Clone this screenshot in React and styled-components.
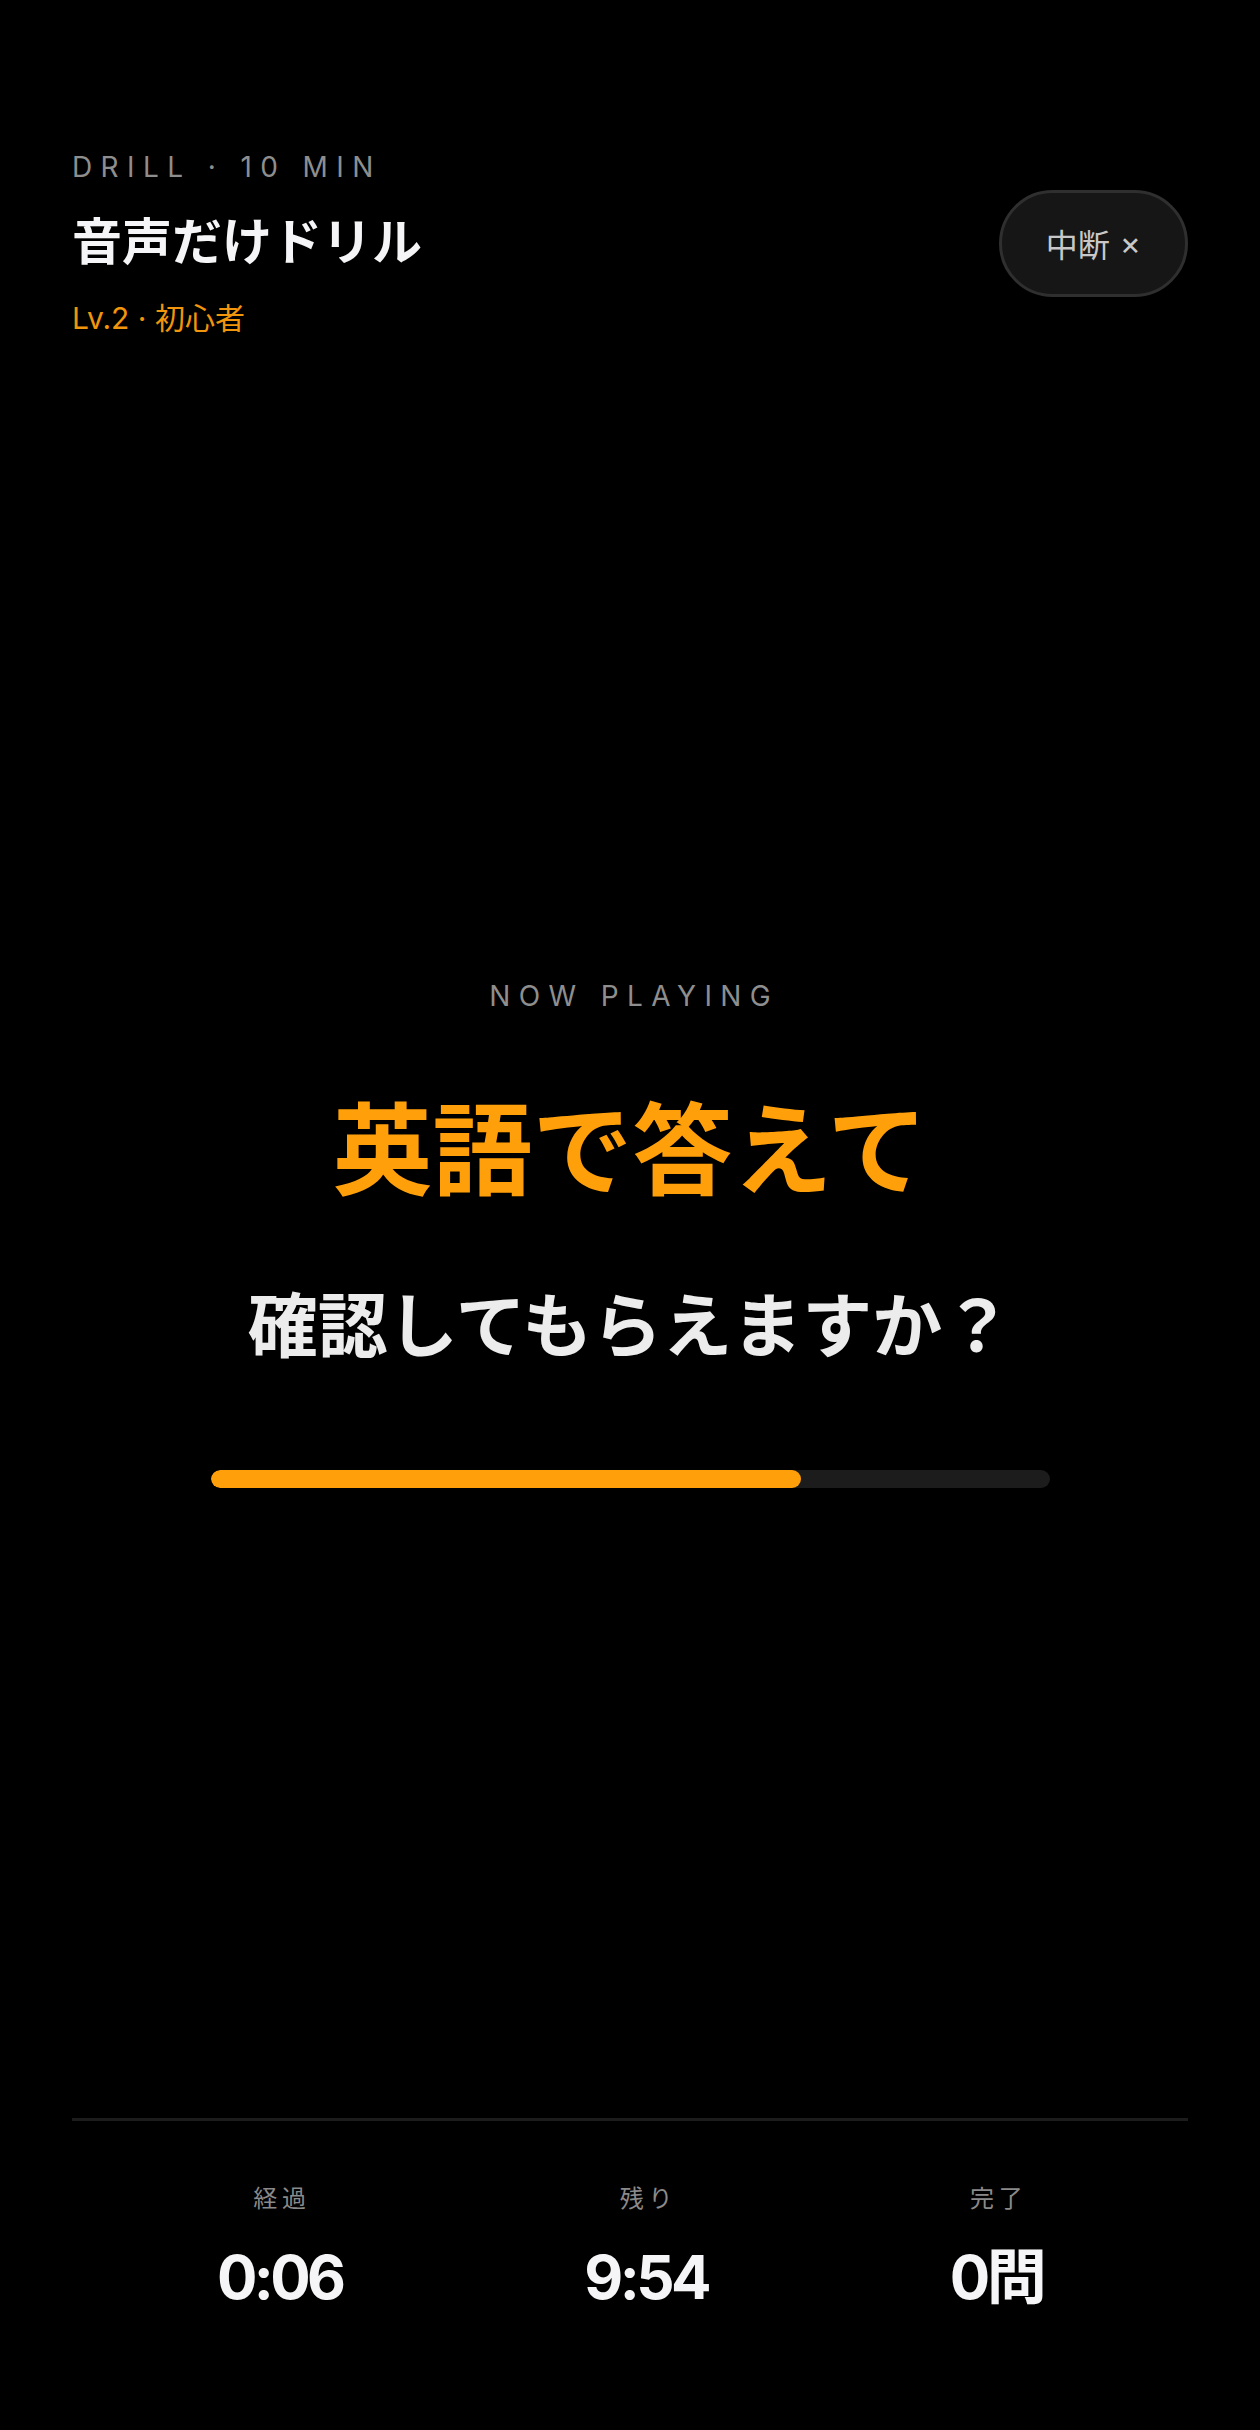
import styled, { createGlobalStyle } from "styled-components";

const GlobalStyle = createGlobalStyle`
    html, body {
        margin: 0;
        padding: 0;
        background: #000;
    }
    body {
        font-family: Inter, "Noto Sans CJK JP", sans-serif;
        color: #f5f5f7;
        -webkit-font-smoothing: antialiased;
    }
`;

const Screen = styled.div`
    min-height: 100vh;
    display: flex;
    flex-direction: column;
    padding: 150px 72px 0;
    box-sizing: border-box;
    background: #000;
`;

const Header = styled.header`
    display: flex;
    align-items: center;
    justify-content: space-between;
`;

const HeaderText = styled.div`
    display: flex;
    flex-direction: column;
`;

const Eyebrow = styled.div`
    font-size: 28px;
    line-height: 34px;
    letter-spacing: 0.3em;
    color: #8e8e8e;
`;

const Title = styled.h1`
    margin: 28px 0 0;
    font-size: 50px;
    line-height: 60px;
    font-weight: 700;
    color: #f5f5f7;
`;

const Level = styled.div`
    margin-top: 28px;
    font-size: 30px;
    line-height: 36px;
    color: #f0950c;
`;

const StopButton = styled.button`
    height: 107px;
    padding: 0 44px;
    border-radius: 54px;
    border: 3px solid #2f2f2f;
    background: #161616;
    color: #c8c8c8;
    font-family: inherit;
    font-size: 32px;
    display: flex;
    align-items: center;
    gap: 10px;
    cursor: pointer;
`;

const Main = styled.main`
    flex: 1;
    padding-top: 12px;
    display: flex;
    flex-direction: column;
    align-items: center;
    justify-content: center;
`;

const NowPlaying = styled.div`
    font-size: 28px;
    line-height: 34px;
    letter-spacing: 0.3em;
    margin-right: -0.3em;
    color: #8e8e8e;
`;

const Prompt = styled.div`
    margin-top: 78px;
    font-size: 100px;
    line-height: 120px;
    font-weight: 700;
    color: #ff9f0a;
`;

const Question = styled.div`
    margin-top: 74px;
    font-size: 70px;
    line-height: 84px;
    font-weight: 700;
    color: #ececec;
`;

const Track = styled.div`
    margin-top: 101px;
    width: 839px;
    height: 18px;
    border-radius: 9px;
    background: #1c1c1c;
    overflow: hidden;
`;

const Fill = styled.div`
    height: 100%;
    border-radius: 9px;
    background: #ff9f0a;
`;

const Footer = styled.footer`
    border-top: 3px solid #1c1c1c;
    padding: 63px 24px 117px;
    display: flex;
    justify-content: space-around;
`;

const Stat = styled.div`
    display: flex;
    flex-direction: column;
    align-items: center;
`;

const StatLabel = styled.div`
    font-size: 24px;
    line-height: 30px;
    letter-spacing: 0.2em;
    margin-right: -0.2em;
    color: #8a8a8a;
`;

const StatValue = styled.div`
    margin-top: 27px;
    font-size: 60px;
    line-height: 72px;
    font-weight: 700;
    letter-spacing: -0.06em;
    color: #f5f5f7;
`;

const stats = [
    { label: "経過", value: "0:06" },
    { label: "残り", value: "9:54" },
    { label: "完了", value: "0問" },
];

export default function App() {
    const progress = 70.4;

    return (
        <>
            <GlobalStyle />
            <Screen>
                <Header>
                    <HeaderText>
                        <Eyebrow>DRILL · 10 MIN</Eyebrow>
                        <Title>音声だけドリル</Title>
                        <Level>Lv.2 · 初心者</Level>
                    </HeaderText>
                    <StopButton>
                        <span>中断</span>
                        <span>×</span>
                    </StopButton>
                </Header>

                <Main>
                    <NowPlaying>NOW PLAYING</NowPlaying>
                    <Prompt>英語で答えて</Prompt>
                    <Question>確認してもらえますか？</Question>
                    <Track>
                        <Fill style={{ width: `${progress}%` }} />
                    </Track>
                </Main>

                <Footer>
                    {stats.map((s) => (
                        <Stat key={s.label}>
                            <StatLabel>{s.label}</StatLabel>
                            <StatValue>{s.value}</StatValue>
                        </Stat>
                    ))}
                </Footer>
            </Screen>
        </>
    );
}
